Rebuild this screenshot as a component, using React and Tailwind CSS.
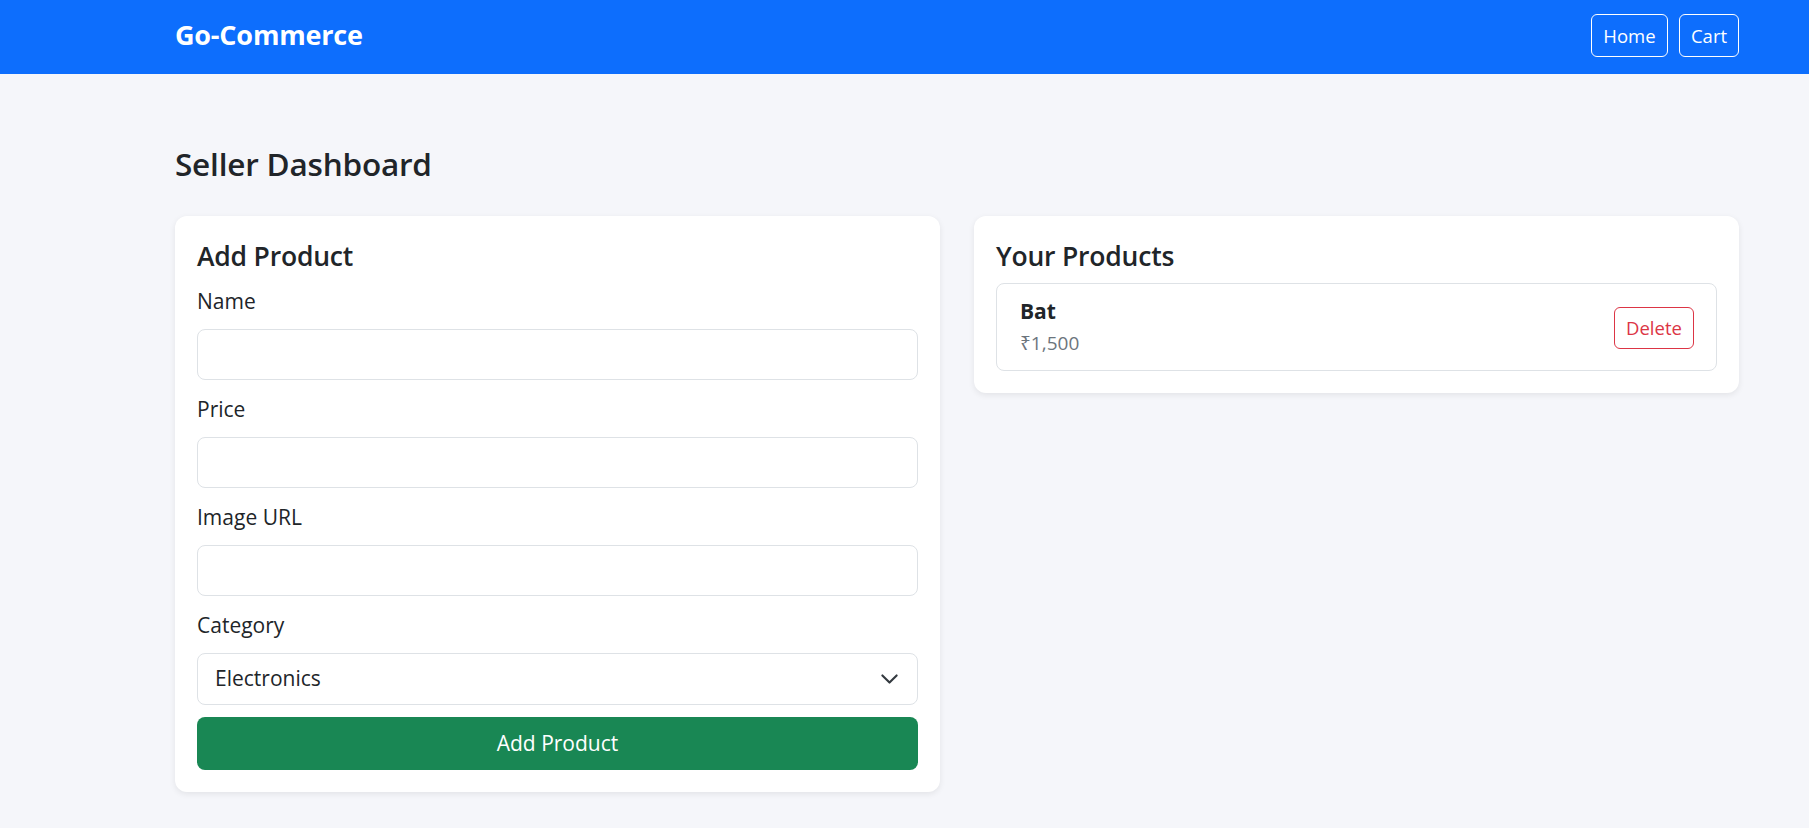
import React from "react";

function Field({ label }) {
  return (
    <div className="mb-[13px]">
      <label className="block text-[21px] leading-[33px] mb-[11px]">{label}</label>
      <input
        type="text"
        className="block w-full h-[51px] border border-[#dee2e6] rounded-[8px] bg-white px-[17px] outline-none"
      />
    </div>
  );
}

export default function App() {
  return (
    <div className="min-h-screen bg-[#f5f6fa] text-[#212529] font-['Open_Sans','Noto_Sans',sans-serif]">
      <nav className="h-[74px] bg-[#0d6efd] flex items-start">
        <div className="ml-[175px] w-[1564px] mt-[14px] h-[43px] flex items-center justify-between">
          <span className="text-white font-bold text-[27px] tracking-[-0.2px]">Go-Commerce</span>
          <div className="flex gap-[11px]">
            <button className="h-[43px] w-[77px] flex items-center justify-center border border-white rounded-[6px] text-white text-[18.5px]">
              Home
            </button>
            <button className="h-[43px] w-[60px] flex items-center justify-center border border-white rounded-[6px] text-white text-[18.5px]">
              Cart
            </button>
          </div>
        </div>
      </nav>

      <main className="ml-[175px] w-[1564px] pb-[40px]">
        <h2 className="mt-[70px] text-[31.5px] leading-[40px] font-semibold tracking-[-0.2px]">Seller Dashboard</h2>

        <div className="mt-[32px] grid grid-cols-2 gap-[34px] items-start">
          <section className="bg-white rounded-[12px] shadow-[0_2px_6px_rgba(0,0,0,0.08)] px-[22px] pt-[24px] pb-[22px]">
            <h4 className="text-[26.5px] leading-[33px] font-semibold tracking-[-0.2px] mb-[12px]">Add Product</h4>
            <Field label="Name" />
            <Field label="Price" />
            <Field label="Image URL" />
            <div>
              <label className="block text-[21px] leading-[33px] mb-[11px]">Category</label>
              <div className="relative">
                <select className="block w-full h-[52px] appearance-none border border-[#dee2e6] rounded-[8px] bg-white pl-[17px] pr-[48px] text-[21px] text-[#212529] outline-none">
                  <option>Electronics</option>
                </select>
                <svg
                  className="pointer-events-none absolute right-[19px] top-1/2 -translate-y-1/2 w-[19px] h-[19px]"
                  viewBox="0 0 16 16"
                  fill="none"
                  stroke="#343a40"
                  strokeWidth="1.8"
                  strokeLinecap="round"
                  strokeLinejoin="round"
                >
                  <path d="m2 5 6 6 6-6" />
                </svg>
              </div>
            </div>
            <button className="mt-[12px] w-full h-[53px] bg-[#198754] text-white text-[21px] rounded-[8px]">
              Add Product
            </button>
          </section>

          <section className="bg-white rounded-[12px] shadow-[0_2px_6px_rgba(0,0,0,0.08)] px-[22px] pt-[24px] pb-[22px]">
            <h4 className="text-[26.5px] leading-[33px] font-semibold tracking-[-0.2px] mb-[10px]">Your Products</h4>
            <div className="border border-[#dee2e6] rounded-[8px] pl-[23px] pr-[22px] pt-[15px] pb-[12px] flex items-center justify-between">
              <div>
                <div className="text-[21px] leading-[25px] font-bold mb-[5px]">Bat</div>
                <div className="text-[19px] leading-[28.5px] text-[#6c757d]">₹1,500</div>
              </div>
              <button className="h-[42px] w-[80px] flex items-center justify-center border border-[#dc3545] rounded-[6px] text-[#dc3545] text-[18.5px]">
                Delete
              </button>
            </div>
          </section>
        </div>
      </main>
    </div>
  );
}
